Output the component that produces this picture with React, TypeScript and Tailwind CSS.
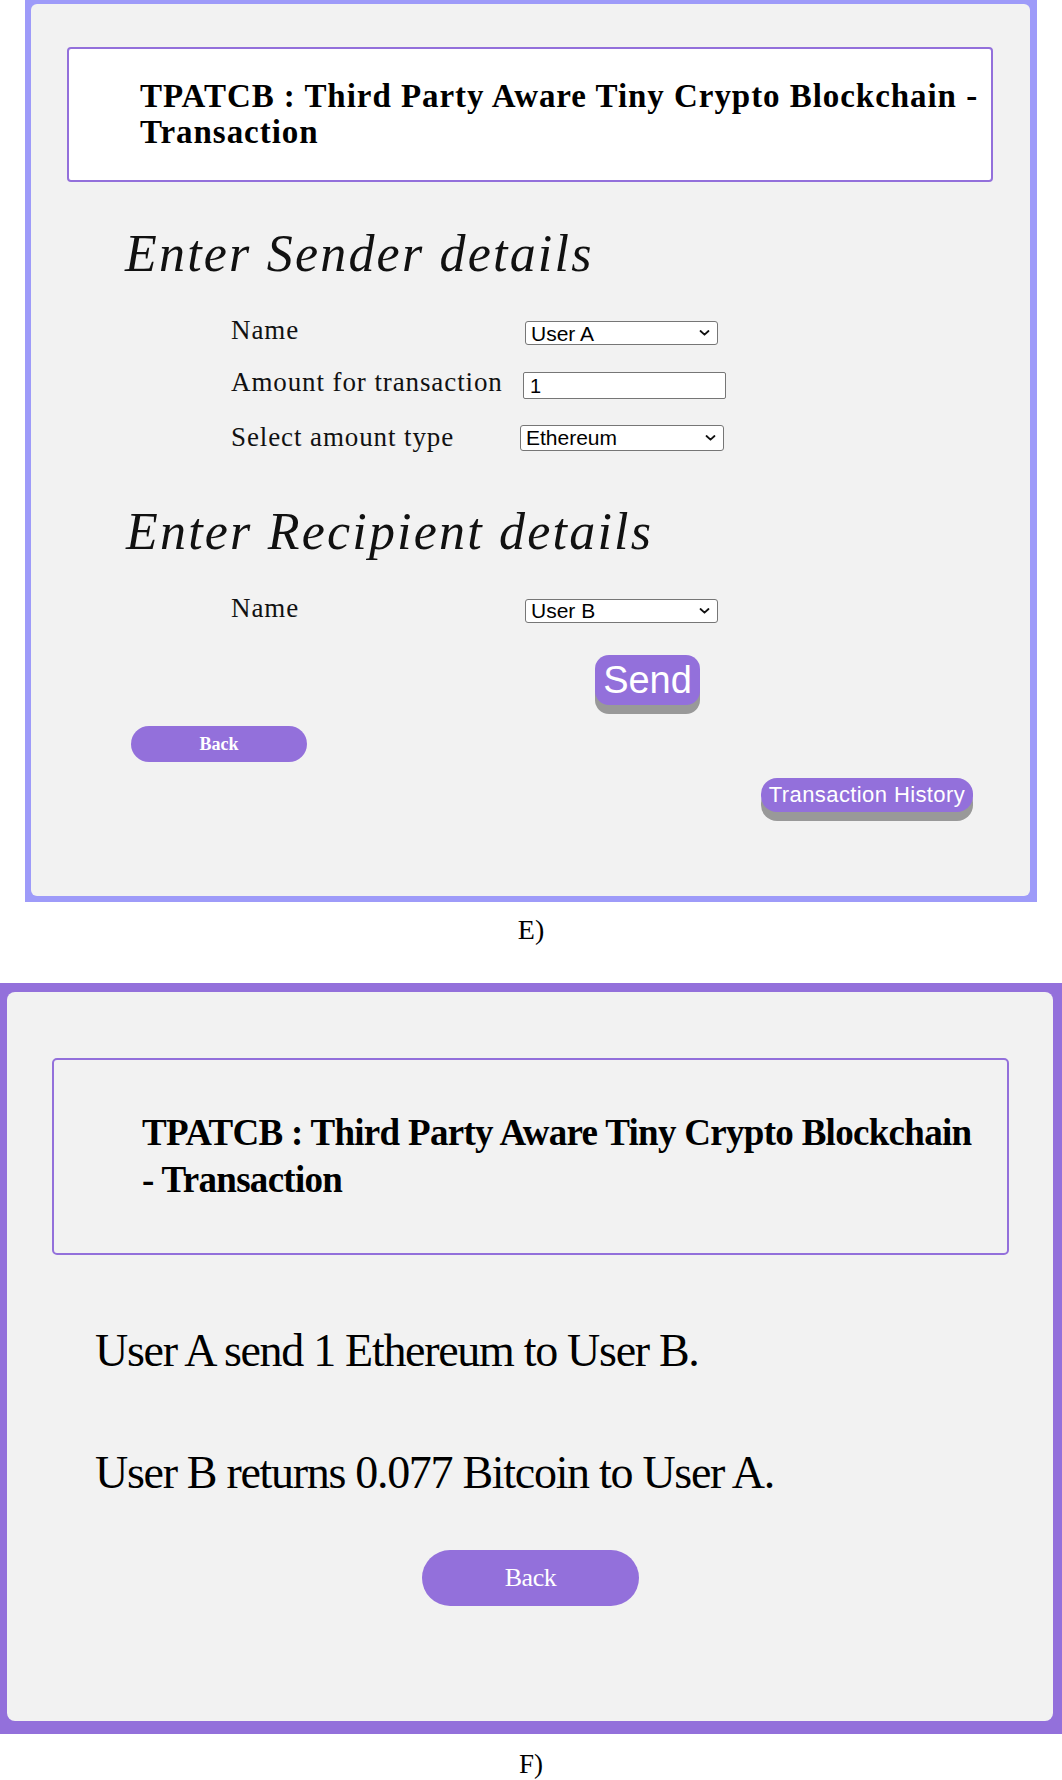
import React from "react";

function Chevron() {
  return (
    <svg
      className="pointer-events-none absolute right-[8px] top-1/2 h-[7px] w-[11px] -translate-y-1/2"
      viewBox="0 0 11 7"
      fill="none"
    >
      <path d="M1.5 1.5 L5.5 5.2 L9.5 1.5" stroke="#111" strokeWidth="1.8" strokeLinecap="round" strokeLinejoin="round" />
    </svg>
  );
}

function FakeSelect({ value, className }: { value: string; className: string }) {
  return (
    <div className={`relative ${className}`}>
      <select
        defaultValue={value}
        className="h-full w-full appearance-none rounded-[3px] border border-[#767676] bg-white pl-[5px] font-['Liberation_Sans',Arial,sans-serif] text-[21px] leading-none text-black outline-none"
      >
        <option>{value}</option>
      </select>
      <Chevron />
    </div>
  );
}

function FieldRow({ label, children, ctrl }: { label: string; children: React.ReactNode; ctrl: string }) {
  return (
    <div className="flex items-start">
      <div className="w-[292px] text-[27px] leading-[30px] tracking-[0.9px] text-[#111]">{label}</div>
      <div className={ctrl}>{children}</div>
    </div>
  );
}

function TransactionForm() {
  return (
    <div className="ml-[25px] w-[1012px] bg-[#9e9bf9] pb-[6px] pl-[6px] pr-[7px] pt-[4px]">
      <div className="flex h-[892px] flex-col rounded-[6px] bg-[#f2f2f2]">
        {/* header */}
        <div className="ml-[36px] mt-[43px] h-[135px] w-[926px] rounded-[4px] border-2 border-[#9370db] bg-white pl-[71px] pt-[29px]">
          <h1 className="whitespace-nowrap text-[33px] font-bold leading-[36px] tracking-[0.95px] text-black">
            TPATCB : Third Party Aware Tiny Crypto Blockchain -
            <br />
            Transaction
          </h1>
        </div>

        <h2 className="ml-[94px] mt-[42px] text-[52px] italic leading-[60px] tracking-[2.2px] text-[#111]">
          Enter Sender details
        </h2>

        <div className="ml-[200px] mt-[31px] flex flex-col gap-[22px]">
          <FieldRow label="Name" ctrl="ml-[2px] mt-[6px]">
            <FakeSelect value="User A" className="h-[24px] w-[193px]" />
          </FieldRow>
          <FieldRow label="Amount for transaction" ctrl="mt-[5px]">
            <input
              defaultValue="1"
              readOnly
              className="h-[27px] w-[203px] rounded-[2px] border border-[#767676] bg-white pl-[6px] font-['Liberation_Sans',Arial,sans-serif] text-[20px] text-black outline-none"
            />
          </FieldRow>
          <FieldRow label="Select amount type" ctrl="-ml-[3px] mt-[3px]">
            <FakeSelect value="Ethereum" className="h-[26px] w-[204px]" />
          </FieldRow>
        </div>

        <h2 className="ml-[95px] mt-[50px] text-[52px] italic leading-[60px] tracking-[2.2px] text-[#111]">
          Enter Recipient details
        </h2>

        <div className="ml-[200px] mt-[31px] flex flex-col">
          <FieldRow label="Name" ctrl="ml-[2px] mt-[6px]">
            <FakeSelect value="User B" className="h-[24px] w-[193px]" />
          </FieldRow>
        </div>

        <button className="ml-[564px] mt-[32px] flex h-[50px] w-[105px] items-center justify-center rounded-[14px] bg-[#9370db] font-['Liberation_Sans',Arial,sans-serif] text-[38px] leading-none text-white shadow-[0_9px_0_#999999]">
          Send
        </button>

        <button className="ml-[100px] mt-[21px] flex h-[36px] w-[176px] items-center justify-center rounded-full bg-[#9370db] text-[18px] font-bold leading-none text-white">
          Back
        </button>

        <button className="ml-[730px] mt-[16px] flex h-[34px] w-[212px] items-center justify-center rounded-[16px] bg-[#9370db] font-['Liberation_Sans',Arial,sans-serif] text-[22px] leading-none tracking-[0.4px] text-white shadow-[0_9px_0_#999999]">
          Transaction History
        </button>
      </div>
    </div>
  );
}

function TransactionResult() {
  return (
    <div className="w-[1062px] bg-[#9370db] pb-[13px] pl-[7px] pr-[9px] pt-[9px]">
      <div className="flex h-[729px] flex-col rounded-[8px] bg-[#f2f2f2]">
        <div className="ml-[45px] mt-[66px] h-[197px] w-[957px] rounded-[5px] border-2 border-[#9370db] pl-[88px] pt-[49px]">
          <h1 className="whitespace-nowrap text-[37px] font-bold leading-[47px] tracking-[-0.7px] text-black">
            TPATCB : Third Party Aware Tiny Crypto Blockchain
            <br />- Transaction
          </h1>
        </div>

        <p className="ml-[88px] mt-[69px] text-[46px] leading-[54px] tracking-[-1.3px] text-black">
          User A send 1 Ethereum to User B.
        </p>
        <p className="ml-[88px] mt-[68px] text-[46px] leading-[54px] tracking-[-1.3px] text-black">
          User B returns 0.077 Bitcoin to User A.
        </p>

        <button className="ml-[415px] mt-[50px] flex h-[56px] w-[217px] items-center justify-center rounded-full bg-[#9370db] text-[26px] leading-none tracking-[-0.5px] text-white">
          Back
        </button>
      </div>
    </div>
  );
}

export default function App() {
  return (
    <div className="w-[1062px] bg-white font-['Liberation_Serif','Times_New_Roman',serif]">
      <TransactionForm />
      <p className="mt-[12px] text-center text-[28px] leading-[32px] text-black">E)</p>
      <div className="mt-[37px]">
        <TransactionResult />
      </div>
      <p className="mt-[15px] text-center text-[27px] leading-[30px] text-black">F)</p>
    </div>
  );
}
